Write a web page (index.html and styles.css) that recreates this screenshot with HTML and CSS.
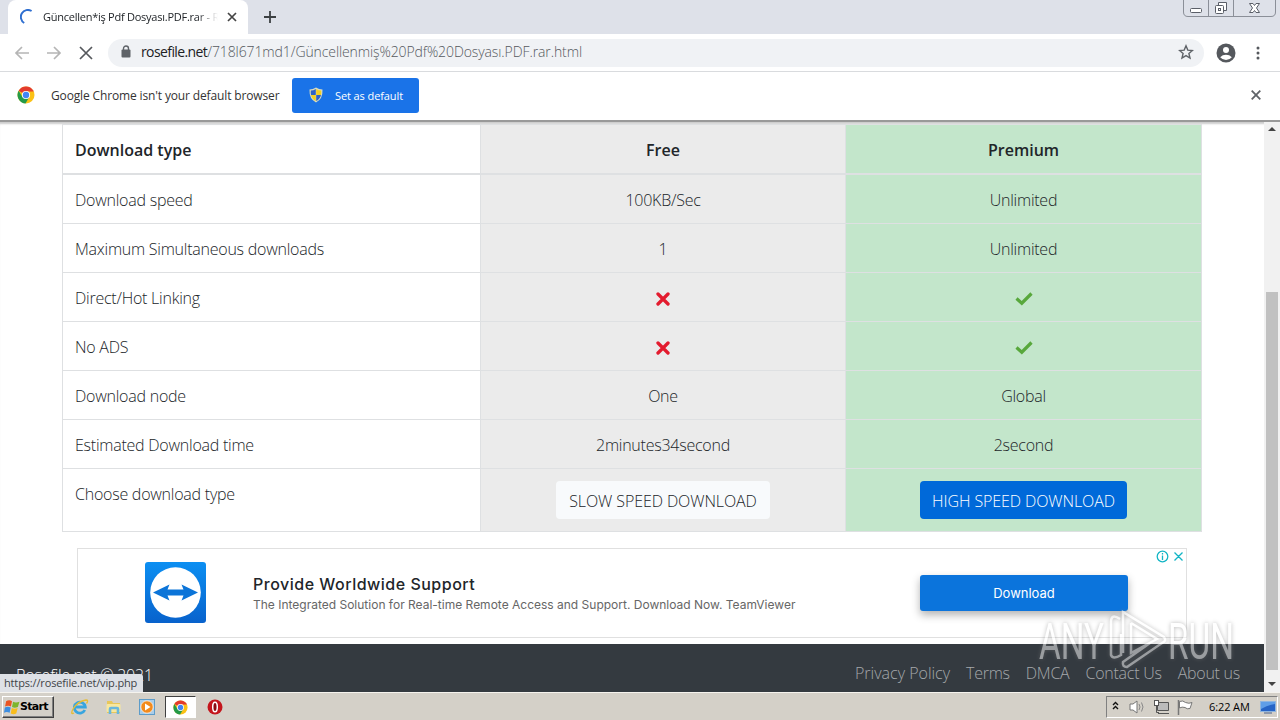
FILE: index.html
```
<!DOCTYPE html>
<html lang="en">

<head>
  <meta charset="UTF-8" />
  <title>Güncellen*iş Pdf Dosyası.PDF.rar - Rosefile</title>
  <link rel="stylesheet" href="styles.css">
</head>

<body>
  <svg class="symbols">
    <symbol id="chrome" viewBox="0 0 18 18">
      <circle cx="9" cy="9" r="8.5" fill="#fbc116" />
      <path d="M9 9L1.6 4.8A8.5 8.5 0 0 1 16.4 4.8L9 5Z" fill="#e33b2e" />
      <path d="M1.6 4.8A8.5 8.5 0 0 0 8.5 17.5L12.3 11L9 9L5.5 11Z" fill="#249a48" />
      <path d="M9 5H16.5" stroke="#e33b2e" stroke-width="1" />
      <circle cx="9" cy="9" r="4.1" fill="#fff" />
      <circle cx="9" cy="9" r="3.2" fill="#4285f4" />
    </symbol>
    <symbol id="cross" viewBox="0 0 14 14">
      <path d="M2 2L12 12M12 2L2 12" stroke="#e31b2e" stroke-width="3.3" stroke-linecap="round" />
    </symbol>
    <symbol id="check" viewBox="0 0 18 14">
      <path d="M1.500 6.500L6.800 11.200L16.500 1.500" fill="none" stroke="#58a83c" stroke-width="3.200" />
    </symbol>
  </svg>

  <div class="screen">
    <!-- tabs -->
    <div class="tabstrip">
      <div class="tab">
        <svg class="spinner" width="16" height="16" viewBox="0 0 16 16"><path d="M4.2 14A7 7 0 0 1 11.6 2" fill="none" stroke="#2f6fd0" stroke-width="2" /></svg>
        <span class="tab-title">Güncellen*iş Pdf Dosyası.PDF.rar - R</span>
        <svg width="10" height="10" viewBox="0 0 10 10"><path d="M1 1L9 9M9 1L1 9" stroke="#444" stroke-width="1.7" /></svg>
      </div>
      <svg class="new-tab" width="12" height="12" viewBox="0 0 12 12"><path d="M6 0V12M0 6H12" stroke="#3c4043" stroke-width="1.8" /></svg>
      <svg class="window-buttons" width="94" height="18" viewBox="0 0 94 18">
        <path d="M.5 0V12Q.5 16.5 5 16.5H88Q92.500 16.500 92.500 12V0M25.500 0V16M50.500 0V16" fill="none" stroke="#8b8f98" />
        <rect x="7.500" y="8.500" width="11" height="4" rx="1" fill="#fff" stroke="#5b5f68" />
        <path d="M35.500 5.500V2.500H43.500V10.500H40.500" fill="#fff" stroke="#5b5f68" />
        <rect x="32.500" y="5.500" width="8" height="8" rx="1" fill="#fff" stroke="#5b5f68" />
        <rect x="35.500" y="8.500" width="2" height="2" fill="none" stroke="#5b5f68" />
        <path d="M66.500 3.500H70L71.500 5.500L73 3.500H76.500L73.500 8L76.500 12.500H73L71.500 10.500L70 12.500H66.500L69.500 8Z" fill="#fff" stroke="#5b5f68" />
      </svg>
    </div>

    <!-- address bar -->
    <div class="toolbar">
      <svg class="nav" width="80" height="16" viewBox="0 0 80 16">
        <path d="M15 8H2M8 2L2 8L8 14M33 8H46M40 2L46 8L40 14" fill="none" stroke="#b5b5b5" stroke-width="1.7" />
        <path d="M66 2L78 14M78 2L66 14" stroke="#55585c" stroke-width="1.700" />
      </svg>
      <div class="omnibox">
        <svg width="10" height="13" viewBox="0 0 10 13"><path d="M2.500 6V3.500A2.500 2.500 0 0 1 7.500 3.500V6" fill="none" stroke="#5f6368" stroke-width="1.400" /><rect x=".5" y="4.500" width="9" height="8" rx="1" fill="#5f6368" /></svg>
        <span class="url"><b>rosefile.net</b>/718l671md1/Güncellenmiş%20Pdf%20Dosyası.PDF.rar.html</span>
        <svg class="star" width="16" height="16" viewBox="0 0 16 16"><path d="M8 1.800L9.800 6.100L14.400 6.500L10.900 9.500L12 14L8 11.600L4 14L5.100 9.500L1.600 6.500L6.200 6.100Z" fill="none" stroke="#5f6368" stroke-width="1.400" /></svg>
      </div>
      <svg class="profile" width="20" height="20" viewBox="0 0 20 20"><circle cx="10" cy="10" r="9.500" fill="#55585d" /><circle cx="10" cy="7" r="3" fill="#fff" /><path d="M4.200 14.200Q6.500 11.800 10 11.800T15.800 14.200Q13.500 17 10 17T4.200 14.200Z" fill="#fff" /></svg>
      <svg class="menu" width="4" height="14" viewBox="0 0 4 14" fill="#55585d"><circle cx="2" cy="2" r="1.500" /><circle cx="2" cy="7" r="1.500" /><circle cx="2" cy="12" r="1.500" /></svg>
    </div>

    <div class="infobar">
      <svg width="18" height="18"><use href="#chrome" /></svg>
      <span class="info-text">Google Chrome isn't your default browser</span>
      <div class="default-btn">
        <svg width="14" height="16" viewBox="0 0 14 16"><path d="M7 .5Q10 2.500 13.500 2.500Q14 12 7 15.500Q0 12 .5 2.500Q4 2.500 7 .5Z" fill="#d9dcc0" /><path d="M6.800 2V8H2Q1.600 6 1.800 3.600Q4.500 3.500 6.800 2ZM7.200 8H12Q11 12 7.200 14Z" fill="#2d62c8" /><path d="M7.200 2V8H12Q12.400 6 12.200 3.600Q9.500 3.500 7.200 2ZM6.800 8H2Q3 12 6.800 14Z" fill="#f3cf22" /></svg>
        <span>Set as default</span>
      </div>
      <svg class="info-close" width="10" height="10" viewBox="0 0 10 10"><path d="M.7 .7L9.300 9.300M9.300 .7L.7 9.300" stroke="#5f6368" stroke-width="1.800" /></svg>
    </div>

    <div class="viewport">
      <div class="page">
        <table class="plans">
          <tr>
            <th>Download type</th>
            <th class="free">Free</th>
            <th class="premium">Premium</th>
          </tr>
          <tr>
            <td>Download speed</td>
            <td class="free">100KB/Sec</td>
            <td class="premium">Unlimited</td>
          </tr>
          <tr>
            <td>Maximum Simultaneous downloads</td>
            <td class="free">1</td>
            <td class="premium">Unlimited</td>
          </tr>
          <tr>
            <td>Direct/Hot Linking</td>
            <td class="free"><svg width="14" height="14"><use href="#cross" /></svg></td>
            <td class="premium"><svg width="18" height="14"><use href="#check" /></svg></td>
          </tr>
          <tr>
            <td>No ADS</td>
            <td class="free"><svg width="14" height="14"><use href="#cross" /></svg></td>
            <td class="premium"><svg width="18" height="14"><use href="#check" /></svg></td>
          </tr>
          <tr>
            <td>Download node</td>
            <td class="free">One</td>
            <td class="premium">Global</td>
          </tr>
          <tr>
            <td>Estimated Download time</td>
            <td class="free">2minutes34second</td>
            <td class="premium">2second</td>
          </tr>
          <tr class="choose">
            <td>Choose download type</td>
            <td class="free"><a class="btn btn-light">SLOW SPEED DOWNLOAD</a></td>
            <td class="premium"><a class="btn btn-primary">HIGH SPEED DOWNLOAD</a></td>
          </tr>
        </table>

        <div class="ad">
          <svg class="ad-logo" width="61" height="61" viewBox="0 0 61 61">
            <defs><linearGradient id="tv" x2="0" y2="1"><stop stop-color="#0c8ff2" /><stop offset="1" stop-color="#0862cc" /></linearGradient></defs>
            <rect width="61" height="61" rx="3" fill="url(#tv)" />
            <circle cx="30.500" cy="30.500" r="25.300" fill="#fff" />
            <path d="M8 30.500L24.500 22.500L22.500 27.500H38.500L36.500 22.500L53 30.500L36.500 38.500L38.500 33.500H22.500L24.500 38.500Z" fill="#0b74d8" />
          </svg>
          <div class="ad-text">
            <div class="ad-title">Provide Worldwide Support</div>
            <div class="ad-desc">The Integrated Solution for Real-time Remote Access and Support. Download Now. TeamViewer</div>
          </div>
          <a class="ad-btn">Download</a>
          <svg class="ad-choices" width="28" height="13" viewBox="0 0 28 13" fill="none" stroke="#12b5c5" stroke-width="1.300">
            <circle cx="6.500" cy="6.500" r="5.300" /><path d="M6.500 5.500V10M6.500 3V4.400M18.500 2.500L26.500 10.500M26.500 2.500L18.500 10.500" />
          </svg>
        </div>

        <footer>
          <span class="copyright">Rosefile.net © 2021</span>
          <a class="privacy">Privacy Policy</a>
          <a>Terms</a>
          <a>DMCA</a>
          <a>Contact Us</a>
          <a>About us</a>
        </footer>
      </div>
      <div class="scrollbar">
        <svg width="8" height="4" viewBox="0 0 8 4"><path d="M0 4L4 0L8 4Z" fill="#444" /></svg>
        <div class="thumb"></div>
        <svg width="8" height="4" viewBox="0 0 8 4"><path d="M0 0L4 4L8 0Z" fill="#444" /></svg>
      </div>
      <div class="status">https://rosefile.net/vip.php</div>
    </div>

    <div class="taskbar">
      <div class="start">
        <svg width="16" height="16" viewBox="0 0 15 15"><path d="M2 2Q5 .5 7.500 2L6.500 7Q4 5.500 1 7Z" fill="#ea5523" /><path d="M8.500 2.500Q11 4 14.500 2.500L13 7.500Q10 9 7.500 7.500Z" fill="#7db52d" /><path d="M.8 8Q3.500 6.500 6.300 8L5.300 13Q2.500 11.500 0 13Z" fill="#3d8ee0" /><path d="M7.300 8.500Q10 10 12.800 8.500L11.500 13.500Q9 15 6.300 13.500Z" fill="#f9bd1b" /></svg>
        <span>Start</span>
      </div>
      <div class="quick">
        <svg width="18" height="18" viewBox="0 0 18 18"><path d="M13.800 12A5.500 5.500 0 1 1 14.300 9H4" fill="none" stroke="#38a5df" stroke-width="2.800" /><path d="M3 15Q-1 17 2 11Q7 3 15 2Q18 2 15.500 5.500" fill="none" stroke="#e7bd35" stroke-width="1.300" /></svg>
        <svg width="18" height="18" viewBox="0 0 18 18"><path d="M2 3H7L8 5H15V15H2Z" fill="#e8c75a" /><rect x="1.500" y="6" width="14" height="8" rx="1" fill="#f8e79e" /><path d="M5 16V11Q5 10 6 10H12Q13 10 13 11V16" fill="none" stroke="#69b7dc" stroke-width="2.600" /></svg>
        <svg width="16" height="16" viewBox="0 0 16 16"><rect x=".5" y=".5" width="15" height="15" fill="#a9cde9" stroke="#5d9cc9" /><circle cx="8" cy="8" r="6.200" fill="#f28a1c" stroke="#fff" stroke-width=".7" /><path d="M6 4.500V11.500L11.500 8Z" fill="#fff" /></svg>
        <div class="active-task"><svg width="15" height="15"><use href="#chrome" /></svg></div>
        <svg width="16" height="16" viewBox="0 0 16 16"><circle cx="8" cy="8" r="7.500" fill="#c4151c" /><ellipse cx="8" cy="8" rx="2.300" ry="4.800" fill="#8b0c12" stroke="#fff" stroke-width="1.500" /></svg>
      </div>
      <div class="tray">
        <svg width="84" height="18" viewBox="0 0 84 18">
          <path d="M2 7L4.500 4.500L7 7M2 11L4.500 8.500L7 11" fill="none" stroke="#111" stroke-width="1.400" />
          <path d="M19 6H22L26 3V15L22 12H19Z" fill="#fff" stroke="#777" />
          <path d="M28 6Q30 9 28 12M30.500 4.500Q33.500 9 30.500 13.500" fill="none" stroke="#888" />
          <path d="M46.500 4.500H57.500V12.500H46.500ZM47 15.500H58" fill="#bbb" stroke="#555" /><rect x="43.500" y="2.500" width="4" height="5" fill="#fff" stroke="#555" /><path d="M45.500 8V14.500H48" fill="none" stroke="#555" />
          <path d="M67.500 2V17" stroke="#777" stroke-width="1.500" /><path d="M68.500 3.500Q72 2 74.500 4.500Q78 6 81 4.500L79 10.500Q76 11.500 74 9.500Q71 8.500 68.500 10Z" fill="#fff" stroke="#777" />
        </svg>
        <span class="clock">6:22 AM</span>
        <svg width="16" height="14" viewBox="0 0 16 14"><rect x=".5" y="1.500" width="15" height="10" fill="#2664c6" stroke="#8fb5df" /><path d="M1 2H15V4Q8 5 1 9Z" fill="#5f9ee8" /><path d="M4 13H12" stroke="#46618c" /></svg>
      </div>
    </div>

    <svg class="watermark" width="200" height="64" viewBox="0 0 200 64">
      <g fill="#fff" font-family="'Liberation Sans Narrow', Roboto, sans-serif" font-size="50">
        <text x="2" y="50" textLength="65" lengthAdjust="spacingAndGlyphs">ANY</text>
        <text x="131" y="50" textLength="66" lengthAdjust="spacingAndGlyphs">RUN</text>
      </g>
      <path d="M83 10Q74 4 74 13V46Q76 51 84 46V25M86 44V3L127 28Q130 32 125 34L90 58Q85 58 86 53L113 34M94 14V44L120 30L94 14" fill="none" stroke="#fff" stroke-width="2.500" />
    </svg>
  </div>
</body>

</html>
```
FILE: styles.css
```
* {
  box-sizing: border-box;
}

body {
  margin: 0;
  font-family: "Open Sans", "Noto Sans", sans-serif;
  color: #212529;
}

svg {
  flex: none;
}

.symbols {
  display: none;
}

.screen {
  position: relative;
  display: flex;
  flex-direction: column;
  width: 1280px;
  height: 720px;
  overflow: hidden;
  background: #fff;
}

/* browser chrome */
.tabstrip {
  display: flex;
  height: 34px;
  padding-left: 8px;
  background: #dee1e9;
}

.tab {
  display: flex;
  align-items: center;
  width: 240px;
  padding: 0 11px 0 12px;
  background: #fff;
  border-radius: 8px 8px 0 0;
}

.tab-title {
  width: 176px;
  margin: -2px 9px 0 7px;
  overflow: hidden;
  white-space: nowrap;
  font-size: 11px;
  letter-spacing: -0.25px;
  -webkit-mask-image: linear-gradient(90deg, #000 88%, transparent);
}

.new-tab {
  margin: 11px 0 0 16px;
}

.window-buttons {
  margin: 0 3px 0 auto;
}

.toolbar {
  display: flex;
  align-items: center;
  height: 38px;
  padding: 0 20px 0 14px;
  border-bottom: 1px solid #d9dbde;
}

.omnibox {
  display: flex;
  align-items: center;
  width: 1096px;
  height: 28px;
  margin-left: 14px;
  padding: 0 10px 2px 13px;
  border-radius: 14px;
  background: #f0f2f5;
}

.url {
  margin-left: 10px;
  color: #55595e;
  font-size: 14px;
  font-weight: 300;
  letter-spacing: -0.1px;
  white-space: nowrap;
}

.url b {
  font-weight: 400;
  letter-spacing: -0.6px;
  color: #202124;
}

.star {
  margin-left: auto;
}

.profile {
  margin-left: 12px;
}

.menu {
  margin-left: auto;
}

.infobar {
  display: flex;
  align-items: center;
  height: 50px;
  padding: 0 19px 2px 17px;
  border-bottom: 2px solid #999;
}

.info-text {
  width: 229px;
  margin: 0 12px 0 16px;
  color: #333;
  font-size: 12px;
  letter-spacing: -0.14px;
  white-space: nowrap;
}

.default-btn {
  display: flex;
  align-items: center;
  gap: 12px;
  width: 127px;
  height: 35px;
  padding-left: 17px;
  border-radius: 3px;
  background: #1a73e8;
  color: #fff;
  font-size: 11px;
  letter-spacing: -0.1px;
}

.info-close {
  margin-left: auto;
}

/* page */
.viewport {
  position: relative;
  display: flex;
  height: 570px;
  box-shadow: inset 0 3px 2px -1px #ccc;
}

.page {
  width: 1264px;
  padding-top: 2px;
}

.plans {
  width: 1140px;
  margin-left: 62px;
  table-layout: fixed;
  border-spacing: 0;
  border-right: 1px solid #dee0e2;
  border-bottom: 1px solid #dee0e2;
  font-size: 16px;
  font-weight: 300;
  line-height: 24px;
  letter-spacing: -0.24px;
}

.plans th,
.plans td {
  height: 49px;
  padding: 13px 12px 11px;
  border-top: 1px solid #dee0e2;
  border-left: 1px solid #dee0e2;
  text-align: left;
  vertical-align: top;
}

.plans th {
  width: 418px;
  height: 51px;
  border-bottom: 2px solid #dee0e2;
  font-weight: 600;
  letter-spacing: 0;
}

.plans tr:nth-child(2) td {
  height: 48px;
  border-top: 0;
}

.plans .free {
  background: #ebebeb;
  text-align: center;
}

.plans .premium {
  background: #c3e6cb;
  text-align: center;
}

.plans th.free {
  width: 365px;
}

.plans th.premium {
  width: 356px;
}

.plans td svg {
  display: block;
  margin: 6px auto 0;
}

.plans .choose td {
  height: 63px;
}

.plans .choose .free,
.plans .choose .premium {
  padding-top: 12px;
}

.btn {
  display: inline-block;
  width: 214px;
  height: 38px;
  padding-top: 8px;
  border-radius: 4px;
  letter-spacing: -0.1px;
  white-space: nowrap;
}

.btn-light {
  background: #f8fafc;
}

.btn-primary {
  width: 207px;
  background: #0069d9;
  color: #fff;
}

.ad {
  position: relative;
  display: flex;
  width: 1110px;
  height: 90px;
  margin: 16px 0 6px 77px;
  border: 1px solid #e0e0e0;
  font-family: Inter, sans-serif;
}

.ad-logo {
  margin: 13px 0 0 67px;
}

.ad-text {
  width: 667px;
  padding: 24px 0 0 47px;
  white-space: nowrap;
}

.ad-title {
  font-size: 16px;
  font-weight: 500;
  line-height: 23px;
  letter-spacing: 0.5px;
}

.ad-desc {
  color: #666;
  font-size: 12px;
  line-height: 18px;
}

.ad-btn {
  width: 208px;
  height: 36px;
  margin: 26px 0 0 47px;
  border-radius: 3px;
  background: #0b74dc;
  box-shadow: 0 4px 8px rgba(0, 0, 0, 0.3);
  color: #fff;
  font-size: 13px;
  line-height: 36px;
  text-align: center;
}

.ad-choices {
  position: absolute;
  top: 1px;
  right: 2px;
}

footer {
  display: flex;
  align-items: center;
  gap: 16px;
  height: 48px;
  padding: 9px 24px 0 16px;
  background: #343a40;
  color: #a5a8ab;
  font-size: 16px;
  font-weight: 300;
  letter-spacing: -0.25px;
  white-space: nowrap;
}

.privacy {
  letter-spacing: 0;
}

.copyright {
  margin-right: auto;
  padding-top: 5px;
  color: #fff;
}

.scrollbar {
  display: flex;
  flex-direction: column;
  align-items: center;
  width: 16px;
  padding: 5px 0 6px;
  background: #f1f1f1;
}

.thumb {
  width: 12px;
  height: 378px;
  margin: 161px 0 12px;
  background: #c1c1c1;
}

.status {
  position: absolute;
  left: 0;
  bottom: 0;
  width: 143px;
  height: 18px;
  padding-left: 4px;
  border-radius: 0 3px 0 0;
  background: #dee1e6;
  color: #3f4347;
  font-size: 11px;
  line-height: 18px;
  letter-spacing: -0.15px;
  white-space: nowrap;
}

/* taskbar */
.taskbar {
  display: flex;
  align-items: center;
  height: 28px;
  padding: 0 2px;
  border-top: 1px solid #f5f3ee;
  background: #d4d0c8;
}

.start {
  display: flex;
  align-items: center;
  gap: 0;
  width: 52px;
  height: 22px;
  padding-left: 1px;
  border: 1px solid;
  border-color: #fff #404040 #404040 #fff;
  box-shadow: inset -1px -1px #808080;
  color: #000;
  font: bold 11px "DejaVu Sans", sans-serif;
  letter-spacing: -0.7px;
}

.quick {
  display: flex;
  align-items: center;
  margin-left: 17px;
  gap: 16px;
}

.active-task {
  display: flex;
  align-items: center;
  justify-content: center;
  width: 31px;
  height: 22px;
  margin: 0 -5px -1px -6px;
  border: 1px solid;
  border-color: #404040 #fff #fff #404040;
  background: #fff;
}

.tray {
  display: flex;
  align-items: center;
  width: 172px;
  height: 22px;
  margin-left: auto;
  padding-left: 4px;
  border: 1px solid;
  border-color: #808080 #fff #fff #808080;
}

.clock {
  width: 41px;
  margin: 0 10px 0 14px;
  color: #000;
  font-size: 11px;
  letter-spacing: -0.1px;
  white-space: nowrap;
}

.watermark {
  position: absolute;
  top: 609px;
  left: 1037px;
  opacity: 0.5;
  filter: drop-shadow(0 0 2px #777);
}
```
